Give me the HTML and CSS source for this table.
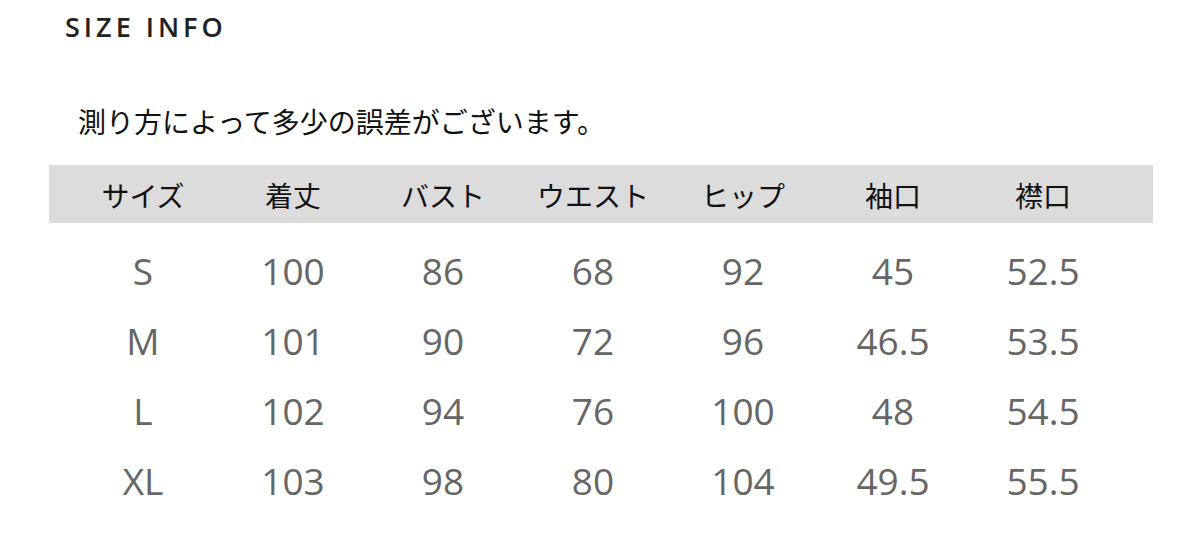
FILE: index.html
```html
<!DOCTYPE html>
<html lang="ja">
<head>
<meta charset="utf-8">
<link rel="stylesheet" href="styles.css">
</head>
<body>
<div class="page">
  <h1 class="title">SIZE INFO</h1>
  <p class="note">測り方によって多少の誤差がございます。</p>
  <div class="table">
    <div class="row head">
      <div class="cell">サイズ</div>
      <div class="cell">着丈</div>
      <div class="cell">バスト</div>
      <div class="cell">ウエスト</div>
      <div class="cell">ヒップ</div>
      <div class="cell">袖口</div>
      <div class="cell">襟口</div>
    </div>
    <div class="row data">
      <div class="cell">S</div><div class="cell">100</div><div class="cell">86</div><div class="cell">68</div><div class="cell">92</div><div class="cell">45</div><div class="cell">52.5</div>
    </div>
    <div class="row data">
      <div class="cell">M</div><div class="cell">101</div><div class="cell">90</div><div class="cell">72</div><div class="cell">96</div><div class="cell">46.5</div><div class="cell">53.5</div>
    </div>
    <div class="row data">
      <div class="cell">L</div><div class="cell">102</div><div class="cell">94</div><div class="cell">76</div><div class="cell">100</div><div class="cell">48</div><div class="cell">54.5</div>
    </div>
    <div class="row data">
      <div class="cell">XL</div><div class="cell">103</div><div class="cell">98</div><div class="cell">80</div><div class="cell">104</div><div class="cell">49.5</div><div class="cell">55.5</div>
    </div>
  </div>
</div>
</body>
</html>
```
FILE: styles.css
```css
html, body {
  margin: 0;
  padding: 0;
  background: #fff;
}
.page {
  width: 1200px;
  height: 548px;
  overflow: hidden;
}
.title {
  margin: 0;
  padding: 12px 0 0 65px;
  height: 36px;
  font-family: "Open Sans", "Noto Sans", sans-serif;
  font-weight: 600;
  font-size: 27px;
  line-height: 30px;
  letter-spacing: 4px;
  color: #222;
}
.note {
  margin: 0;
  padding: 56px 0 0 78px;
  height: 44px;
  font-family: "Noto Sans CJK JP", sans-serif;
  font-size: 28px;
  line-height: 34px;
  color: #111;
}
.table {
  margin-top: 17px;
}
.row {
  display: grid;
  grid-template-columns: repeat(7, 150px);
  padding-left: 68px;
}
.head {
  margin-left: 49px;
  width: 1104px;
  padding-left: 19px;
  box-sizing: border-box;
  height: 58px;
  align-items: center;
  background: #dcdcdc;
  font-family: "Noto Sans CJK JP", sans-serif;
  font-size: 28px;
  color: #111;
  margin-bottom: 14px;
}
.head .cell {
  text-align: center;
  line-height: 1;
  padding-top: 2px;
}
.data {
  height: 70px;
  align-items: center;
  font-family: "Open Sans", "Noto Sans", sans-serif;
  font-size: 37px;
  color: #666;
}
.data .cell {
  text-align: center;
  line-height: 1;
  padding-bottom: 4px;
}
```
